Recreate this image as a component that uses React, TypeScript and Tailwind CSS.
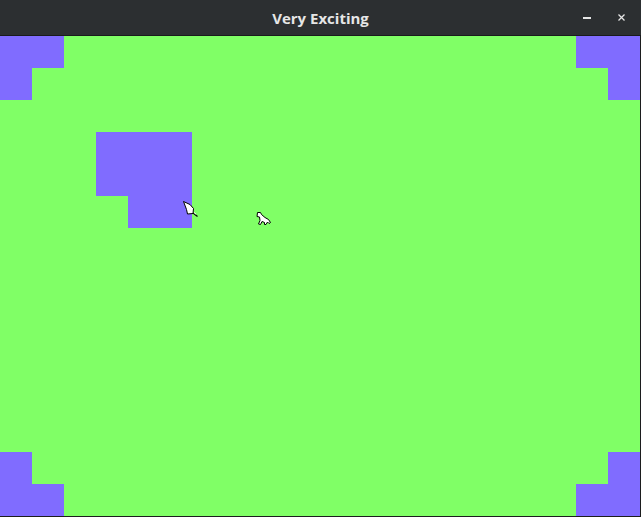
import React from 'react';

// purple tiles on the 20x15 board (32px cells)
const tiles = [
  'col-start-1 row-start-1 col-span-2',
  'col-start-1 row-start-2',
  'col-start-19 row-start-1 col-span-2',
  'col-start-20 row-start-2',
  'col-start-1 row-start-14',
  'col-start-1 row-start-15 col-span-2',
  'col-start-20 row-start-14',
  'col-start-19 row-start-15 col-span-2',
  'col-start-4 row-start-4 col-span-3 row-span-2',
  'col-start-5 row-start-6 col-span-2',
];

const App = () => {
  return (
    <div className="w-[641px] h-[517px] bg-[#1c1d1e] flex flex-col overflow-hidden">
      {/* Title bar */}
      <div className="h-[35px] bg-[#2c2f31] flex items-center relative shrink-0">
        <div
          className="flex-1 text-center text-[15px] font-bold text-[#e6e6e6] pt-[1px]"
          style={{ fontFamily: '"Open Sans", "DejaVu Sans", sans-serif' }}
        >
          Very Exciting
        </div>
        <div className="absolute right-[16px] top-0 h-full flex items-center gap-[27px]">
          <div className="w-[8px] h-[2px] bg-[#e6e6e6] mt-[1px]" />
          <svg width="7" height="7" viewBox="0 0 7 7" className="mr-[0px]">
            <path d="M0.5 0.5 L6.5 6.5 M6.5 0.5 L0.5 6.5" stroke="#e6e6e6" strokeWidth="1.3" />
          </svg>
        </div>
      </div>
      <div className="h-[1px] bg-[#1a1b1c] shrink-0" />

      {/* Board */}
      <div className="relative w-[640px] h-[480px] bg-[#80ff66] grid grid-cols-[repeat(20,32px)] grid-rows-[repeat(15,32px)]">
        {tiles.map((t, i) => (
          <div key={i} className={`${t} bg-[#806cff]`} />
        ))}

        {/* cursor sprites */}
        <svg className="absolute left-[182px] top-[164px]" width="18" height="18" viewBox="0 0 18 18">
          <path d="M1.5 1.5 L8 4.5 L11.5 8.5 L11 13.5 L5.5 14 L4.5 9.5 Z" fill="#fff" stroke="#000" strokeWidth="1" />
          <path d="M11 13 L15.5 16.5" stroke="#000" strokeWidth="1.2" />
          <path d="M12 12.5 L14 14.2" stroke="#fff" strokeWidth="1" />
        </svg>
        <svg className="absolute left-[255px] top-[175px]" width="18" height="17" viewBox="0 0 18 17">
          <path
            d="M2.5 1.5 L5.5 1.5 L6.5 3.5 L10 6.5 L13.5 8.5 L15.5 11.5 L14 12.5 L12.5 11 L11 13.5 L9.5 13.5 L9.5 11.5 L7 10.5 L5.5 13.5 L3.5 13 L5 9.5 L4.5 6 L2 5.5 Z"
            fill="#fff"
            stroke="#000"
            strokeWidth="1"
          />
        </svg>
      </div>
    </div>
  );
};

export default App;
